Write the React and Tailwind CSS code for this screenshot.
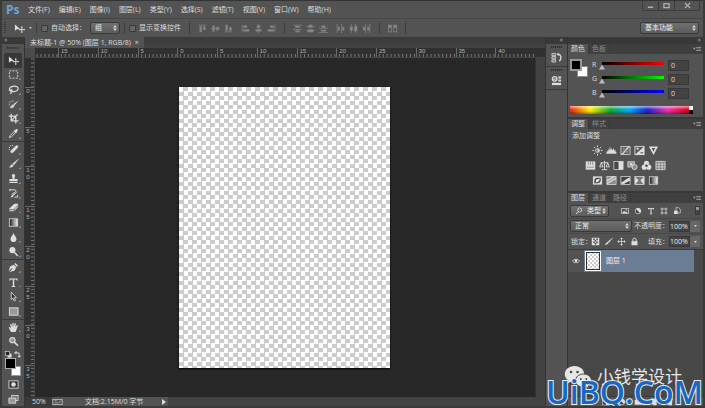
import clsx from 'clsx';

const menus = ['文件(F)', '编辑(E)', '图像(I)', '图层(L)', '类型(Y)', '选择(S)', '滤镜(T)', '视图(V)', '窗口(W)', '帮助(H)'];

const icons = {
  move: <><path d="M1 1.5v7l2-1.8 3.4-.4z" /><path d="M8.5 4.2v6M5.5 7.2h6" stroke="currentColor" strokeWidth="1" /><path d="M8.5 3.4l1.2 1.4H7.3zM8.5 11l1.2-1.4H7.3zM4.8 7.2L6.2 6v2.4zM12 7.2L10.8 6v2.4z" /></>,
  marquee: <rect x="1.5" y="2" width="9" height="8" fill="none" stroke="currentColor" strokeDasharray="2 1.4" />,
  lasso: <path d="M3.2 8.2C.6 7 1 3.4 5 2.6c4-.7 6.600.8 6 2.900-.5 2.200-4 3.500-7.300 2.300-1.800-.8-.4-2.200.7-1 .8 1.200-.4 2.400-1.800 3.900" fill="none" stroke="currentColor" strokeWidth="1.3" />,
  quick: <><path d="M11.500 1.500L7 7 5.600 5.800z" /><path d="M5.200 6.200l1.500 1.400C6 9.500 4 9.800 2.500 9.300c1.400-.6 1.300-2.500 2.700-3.100z" stroke="currentColor" strokeWidth=".8" /><path d="M6 2.500C3.500 1.500 1 3.500 1.500 6c.1.800.5 1.400 1 1.800" fill="none" stroke="currentColor" strokeDasharray="1.200 1" strokeWidth=".9" /></>,
  crop: <path d="M3.500.8v7.700h8M.8 3.500h7.700v8M4 8l6.500-6.500" fill="none" stroke="currentColor" strokeWidth="1.400" />,
  dropper: <><path d="M7.200 2.800l1.600-1.500c1-.9 2.600.6 1.800 1.700L9.200 4.600l.4.500-1 .9-2.700-2.700.9-.9z" /><path d="M6.300 4.300L2.500 8.200 1.500 10.500l2.300-1 3.900-3.800" fill="none" stroke="currentColor" strokeWidth="1" /></>,
  heal: <><path d="M3.300 7.300l5.200-5.200c1.400-1.200 3.300.6 2 2L5.300 9.300c-1.400 1.200-3.200-.7-2-2z" stroke="currentColor" strokeWidth=".6" /><path d="M5.500 1.800C3 .9.800 3 1.300 5.500c.1.800.5 1.300.8 1.700" fill="none" stroke="currentColor" strokeDasharray="1.200 1" strokeWidth=".9" /></>,
  brush: <><path d="M11.500 1.200L6.500 7.500 5 6.200z" stroke="currentColor" strokeWidth=".4" /><path d="M4.600 6.700l1.500 1.400C5.200 10 3 10.600.8 10.200c1.800-.7 2-3 3.800-3.500z" /></>,
  stamp: <path d="M4.800 4.500C3.500 2.800 4.500 1 6 1s2.500 1.800 1.200 3.500L7 6.500h3.500V9h-9V6.500H5zM1.500 9.700h9v1.100h-9z" />,
  history: <><path d="M11 3.500L6.500 8 5.200 7z" /><path d="M5 7.300L6.300 8.500C5.500 10 4 10.300 2.500 10c1.300-.6 1.200-2.200 2.500-2.700z" /><path d="M2 2h5.500c1.400.2 1.500 1.800.4 2.400L4 7M7 10h3.500V7.500M2 1v2.500" fill="none" stroke="currentColor" strokeWidth="1" /></>,
  eraser: <><path d="M1 7.600L6 2.600Q6.500 2 7.300 2h3.300q1 .2.400 1L6.800 7.600z" /><path d="M1.200 8.300h5.200v1.900H1.800zM7.200 8l3.900-4.500v2L7.200 10z" opacity=".8" /></>,
  drop: <path d="M6 1c.5 2.500 3.300 4 3.300 6.500C9.300 9.700 7.800 11 6 11S2.700 9.700 2.700 7.500C2.700 5 5.500 3.500 6 1z" />,
  dodge: <><circle cx="4.800" cy="4.500" r="3.300" /><path d="M6.800 6.800l4 4" stroke="currentColor" strokeWidth="1.500" /></>,
  pen: <path d="M8 1l3 3-1.300 1.300L6.800 2.300zM6.200 2.900l2.900 2.900L7 9.600l-5.500 1.200L5 7.300l-.6-.7-3.600 3.500L2.200 5z" />,
  type: <path d="M1.500 1.500h9v2.700h-.8c-.2-1-.6-1.500-1.500-1.500H6.800v6.600c0 .6.300.8 1.200.9v.6H4v-.6c.9-.1 1.200-.3 1.200-.9V2.700H3.800c-.9 0-1.300.5-1.500 1.500h-.8z" />,
  select: <path d="M3.500 1.200v8.200l1.900-1.700 1.300 3.200 1.400-.6-1.400-3h2.500z" fill="#333" stroke="currentColor" strokeWidth=".9" />,
  shape: <rect x="1.500" y="2" width="9.500" height="8" fill="#999" stroke="currentColor" />,
  hand: <path d="M3.300 10.800L.8 6.300c-.2-.9.700-1.200 1.200-.5l1.200 1.400-.8-4.600c0-.9 1.100-1 1.300-.1L4.600 5.500 4.800 1.400c.1-.8 1.200-.8 1.300 0L6.300 5.400l.9-3.700c.3-.8 1.300-.6 1.300.2L8.200 5.800l1.400-2.200c.5-.6 1.300-.2 1.100.6L9.200 8.700l-1 2.200z" />,
  zoom: <><circle cx="4.800" cy="4.500" r="2.900" fill="#999" stroke="currentColor" strokeWidth="1.100" /><path d="M6.900 6.700l4 4" stroke="currentColor" strokeWidth="1.700" /></>,
  mask: <><rect x="1" y="2" width="10" height="8" fill="#333" stroke="currentColor" strokeWidth=".9" /><circle cx="6" cy="6" r="2.500" /></>,
  screen: <><rect x="4" y="1.500" width="7" height="5.500" fill="#777" stroke="currentColor" strokeWidth=".9" /><rect x="1" y="4.500" width="7.500" height="5.500" fill="#999" stroke="currentColor" strokeWidth=".9" /></>,
  gradient: <><rect x="1.500" y="2" width="9" height="8" fill="none" stroke="currentColor" />{[2, 4, 6, 8].map((x, i) => <rect key={x} x={x} y="2.500" width="2" height="7" fill={['#333', '#777', '#aaa', '#ddd'][i]} />)}</>,
  sun: <><circle cx="6" cy="6" r="2" fill="none" stroke="currentColor" /><path d="M6 4a2 2 0 010 4z" /><path d="M6 .5v2M6 9.500v2M.5 6h2M9.500 6h2M2.100 2.100l1.400 1.400M8.500 8.500l1.400 1.400M2.100 9.900l1.400-1.400M8.500 3.500l1.400-1.400" stroke="currentColor" /></>,
  levels: <path d="M.5 9.500V7l1 .5V5.500l1 1.500V4l1 2 .8-4L5.500 6l.8-3 1 3 1-2.500 1 3 1-1.500V7l1 .5v2z" />,
  curves: <><rect x="1" y="1.500" width="10" height="9" fill="none" stroke="currentColor" strokeWidth=".8" /><path d="M1 4.500h10M1 7.500h10M4.300 1.500v9M7.700 1.500v9" stroke="currentColor" strokeWidth=".4" /><path d="M1.500 10C6 9.500 6 2.500 10.500 2" fill="none" stroke="currentColor" strokeWidth="1.300" /></>,
  exposure: <><rect x="1" y="1.500" width="10" height="9" fill="none" stroke="currentColor" /><path d="M11 1.500v9H1z" /><path d="M2.500 4h3M4 2.600v2.800" stroke="currentColor" /><path d="M7 8.500h3" stroke="#444" /></>,
  vibrance: <path d="M1 1.500h10L6 10.800zM4 3.400L6 7l2-3.600z" fillRule="evenodd" />,
  hue: <><path d="M.8 1.500h10.400v9H.8z" /><path d="M3.500 1.500v4M6 1.500v4M8.500 1.500v4M2 7.800h8" stroke="#777" strokeWidth=".8" /></>,
  balance: <path d="M6 1v9M3 10.500h6M2 3h8M2.500 3L.8 7.500h3.600zM9.500 3L7.700 7.500h3.600z" fill="none" stroke="currentColor" strokeWidth="1" />,
  bw: <><rect x="1" y="1.500" width="10" height="9" fill="#444" stroke="currentColor" strokeWidth=".8" /><path d="M6 1.500h5v9H6z" /></>,
  photo: <><rect x="1" y="2" width="7" height="5.500" fill="#888" stroke="currentColor" /><circle cx="4.500" cy="4.700" r="1.500" /><circle cx="8.300" cy="7.700" r="2.700" fill="#888" stroke="currentColor" /></>,
  mixer: <><circle cx="6" cy="3.500" r="2.800" /><circle cx="3.500" cy="7.800" r="2.800" /><circle cx="8.500" cy="7.800" r="2.800" /><circle cx="6" cy="6.300" r="1.300" fill="#444" /></>,
  lookup: <path d="M1 1.500h10v9H1zM1 4.500h10M1 7.500h10M4.300 1.500v9M7.700 1.500v9" fill="#777" stroke="currentColor" strokeWidth=".9" />,
  invert: <><path d="M1 1.500h10v9H1z" /><path d="M2.500 9V6a3.500 3.500 0 013.500-3h3.500v3A3.500 3.500 0 016 9z" fill="#444" /><path d="M4 8c0-3 1-4 4.500-4-.5 2.500-1 4-4.500 4z" /></>,
  poster: <><rect x="1" y="1.500" width="10" height="9" fill="#888" stroke="currentColor" strokeWidth=".8" /><path d="M1 9.500L11 3.500M1 6.500l8-5" stroke="currentColor" strokeWidth="1.600" /></>,
  threshold: <><rect x="1" y="1.500" width="10" height="9" fill="#444" stroke="currentColor" strokeWidth=".8" /><path d="M1.500 7.500C5 7.500 7 3 10.800 3v3.500C8 6.500 6 10 1.500 10z" /></>,
  selective: <><rect x="1" y="1.500" width="10" height="9" fill="#777" stroke="currentColor" strokeWidth=".8" /><path d="M1 1.500L5 6 1 10.500zM11 1.500L7 6l4 4.500z" /></>,
  image: <><rect x="1" y="2" width="10" height="8" fill="none" stroke="currentColor" /><path d="M2 9l2.500-3.500L6.500 8l1.500-1.300L10 9z" /><circle cx="7.800" cy="4.500" r="1" /></>,
  half: <><circle cx="6" cy="6" r="4.200" fill="#444" stroke="currentColor" /><path d="M3 3a4.200 4.200 0 016 6z" /></>,
  frame: <path d="M3 .8v10.400M9 .8v10.400M.8 3h10.400M.8 9h10.400" fill="none" stroke="currentColor" strokeWidth="1.100" />,
  smart: <><path d="M4.500 1h4L11 3.500V9H4.500z" fill="none" stroke="currentColor" /><path d="M1.500 5.500H7v5H1.500z" /></>,
  checker: <><path d="M1 1h10v10H1z" /><path d="M3 2h2v2H3zM7 2h2v2H7zM5 4h2v2H5zM3 6h2v2H3zM7 6h2v2H7zM5 8h2v2H5z" fill="#444" /></>,
  cross: <path d="M6 .5l2 2.200H6.500v2.800h2.800V4l2.200 2-2.200 2V6.500H6.500v2.800H8l-2 2.200-2-2.200h1.500V6.500H2.700V8L.5 6l2.200-2v1.500h2.800V2.700H4z" />,
  lock: <><path d="M2 5.500h8v5.500H2z" /><path d="M3.800 5.500V3.500c0-2.600 4.400-2.600 4.400 0v2" fill="none" stroke="currentColor" strokeWidth="1.300" /></>,
  eye: <><path d="M.8 6C3 2.500 9 2.500 11.200 6 9 9.500 3 9.500.8 6z" fill="none" stroke="currentColor" strokeWidth="1.100" /><circle cx="6" cy="5.800" r="2" /></>,
  historyPanel: <><path d="M1 1.500h4v2.500H1zM1 5h4v2.500H1zM1 8.500h4V11H1z" fill="#777" stroke="currentColor" strokeWidth=".8" /><path d="M7 2.500h1.500c3 1 3 5 .5 7.500" fill="none" stroke="currentColor" strokeWidth="1.400" /><path d="M6 2.500L8.500.8v3.500z" /></>,
  properties: <><circle cx="4" cy="4.200" r="2.600" fill="#777" stroke="currentColor" strokeWidth="1.200" /><path d="M2 4h4v1H2zM8 1.500h3v2.300H8zM8 4.800h3V7H8z" /><path d="M1 8.500h10V11H1z" /></>,
  search: <><circle cx="7" cy="4.500" r="3" fill="none" stroke="currentColor" strokeWidth="1.200" /><path d="M5 6.800L1.500 10.500" stroke="currentColor" strokeWidth="1.500" /></>,
  folder: <path d="M1 2.500h4l1 1.500h5v6H1z" />,
  page: <path d="M2 1h8v10H5L2 8z" />,
  trash: <path d="M1.500 2h3V1h3v1h3v1.200h-9zM2.500 4h7L9 11H3z" />,
  menu: <path d="M0 4h4L2 7zM5 3h7v1H5zM5 5.500h7v1H5zM5 8h7v1H5z" />,
  alTop: <path d="M1 1h10v1H1zM2 3h3v8H2zM7 3h3v5H7z" />,
  alMid: <path d="M0 5.500h12v1H0zM2 2h3v8H2zM7 3.500h3v5H7z" />,
  alBottom: <path d="M1 10h10v1H1zM2 1h3v8H2zM7 4h3v5H7z" />,
  alLeft: <path d="M1 1h1v10H1zM3 2h5v3H3zM3 7h8v3H3z" />,
  alCenter: <path d="M5.500 0h1v12h-1zM3.500 2h5v3h-5zM2 7h8v3H2z" />,
  alRight: <path d="M10 1h1v10h-1zM4 2h5v3H4zM1 7h8v3H1z" />,
  diTop: <path d="M0 1h12v1H0zM3 2.500h6v2.500H3zM0 7h12v1H0zM3 8.500h6V11H3z" />,
  diMid: <path d="M0 2.500h12v1H0zM3.500 1h5v4h-5zM0 8.500h12v1H0zM2.500 7h7v4h-7z" />,
  diBottom: <path d="M0 5h12v1H0zM3.500 2h5v2.500h-5zM0 10.500h12v1H0zM2.500 7.500h7V10h-7z" />,
  diLeft: <path d="M1 0h1v12H1zM2.500 3.500H5v5H2.500zM7 0h1v12H7zM8.500 3.500H11v5H8.500z" />,
  diCenter: <path d="M2.500 0h1v12h-1zM1 3.500h4v5H1zM8.500 0h1v12h-1zM7 2.500h4v7H7z" />,
  diRight: <path d="M4.500 0h1v12h-1zM1.500 3.500H4v5H1.500zM10 0h1v12h-1zM7 3.500h2.500v5H7z" />,
  auto: <path d="M0 1h5v10H0zM1 5v5h3V5zM7 1h5v10H7zM8 5v5h3V5z" fillRule="evenodd" />,
};

const Icon = ({ name, className = 'size-[11px]' }) => (
  <svg viewBox="0 0 12 12" fill="currentColor" className={clsx('shrink-0', className)} aria-hidden="true">{icons[name]}</svg>
);

const toolGroups = [
  ['move', 'marquee', 'lasso', 'quick', 'crop', 'dropper'],
  ['heal', 'brush', 'stamp', 'history', 'eraser', 'gradient', 'drop', 'dodge'],
  ['pen', 'type', 'select', 'shape'],
  ['hand', 'zoom'],
];

const alignGroups = [
  ['alTop', 'alMid', 'alBottom'],
  ['alLeft', 'alCenter', 'alRight'],
  ['diTop', 'diMid', 'diBottom'],
  ['diLeft', 'diCenter', 'diRight'],
];

const channels = [
  { name: 'R', track: 'bg-[linear-gradient(to_right,#000,#f00)]' },
  { name: 'G', track: 'bg-[linear-gradient(to_right,#000,#0f0)]' },
  { name: 'B', track: 'bg-[linear-gradient(to_right,#000,#00f)]' },
];

const adjustments = [
  ['sun', 'levels', 'curves', 'exposure', 'vibrance'],
  ['hue', 'balance', 'bw', 'photo', 'mixer', 'lookup'],
  ['invert', 'poster', 'threshold', 'selective', 'gradient'],
];

const Separator = () => <span className="h-3 w-px shrink-0 bg-[#3c3c3c]" />;

const Grip = () => <div className="mx-auto h-[2px] w-3 bg-[repeating-linear-gradient(to_right,#333_0_1px,#4a4a4a_1px_2px)]" />;

const Select = ({ label, value, className, icon }) => (
  <div className={clsx('relative flex h-3 items-center rounded-xs border border-[#3a3a3a] bg-linear-to-b from-[#707070] to-[#5c5c5c]', className)}>
    {icon && <Icon name={icon} className="ml-1 size-2" />}
    <select aria-label={label} className="h-full w-full min-w-0 appearance-none bg-transparent pl-1 text-[#eee] outline-none">
      <option>{value}</option>
    </select>
    <svg viewBox="0 0 6 10" fill="#ddd" className="pointer-events-none absolute right-[2px] h-[6px] w-1"><path d="M3 0l3 4H0zM3 10l3-4H0z" /></svg>
  </div>
);

const Checkbox = ({ id, children }) => (
  <label htmlFor={id} className="flex items-center gap-[3px] whitespace-nowrap">
    <input id={id} type="checkbox" className="size-[7px] appearance-none rounded-[1px] border border-[#3a3a3a] bg-[#666] checked:bg-[#ccc]" />
    {children}
  </label>
);

const PanelTabs = ({ tabs }) => (
  <div className="flex h-[10px] shrink-0 items-stretch bg-[#3f3f3f]">
    {tabs.map((tab, i) => (
      <button key={tab} type="button" className={clsx('border-r border-[#383838] px-[3px] leading-[10px]', i === 0 ? 'bg-[#535353] text-[#ddd]' : 'text-[#8c8c8c]')}>{tab}</button>
    ))}
    <button type="button" aria-label="菜单" className="mr-[2px] ml-auto text-[#aaa]"><Icon name="menu" className="size-2" /></button>
  </div>
);

const MenuBar = () => (
  <header className="flex h-[18px] shrink-0 items-center border-t border-[#333] bg-[#535353]">
    <span className="w-[26px] pl-1 text-[12px] leading-4 font-bold text-[#6ba4dd]">Ps</span>
    <nav className="flex gap-[9px]">
      {menus.map(m => <button key={m} type="button" className="whitespace-nowrap">{m}</button>)}
    </nav>
    <div className="mr-[3px] ml-auto flex h-[10px] self-start rounded-b-xs border border-t-0 border-[#3c3c3c] text-[#bbb]">
      <button type="button" aria-label="最小化" className="flex w-4 items-center justify-center border-r border-[#3c3c3c]"><svg viewBox="0 0 8 8" className="size-[7px]"><path d="M1 6h6" stroke="currentColor" strokeWidth="1.500" /></svg></button>
      <button type="button" aria-label="最大化" className="flex w-4 items-center justify-center border-r border-[#3c3c3c]"><svg viewBox="0 0 8 8" className="size-[7px]"><rect x="1" y="2" width="6" height="4.500" fill="none" stroke="currentColor" strokeWidth="1.300" /></svg></button>
      <button type="button" aria-label="关闭" className="flex w-6 items-center justify-center"><svg viewBox="0 0 8 8" className="size-[7px]"><path d="M1 1l6 6M7 1L1 7" stroke="currentColor" strokeWidth="1.300" /></svg></button>
    </div>
  </header>
);

const OptionsBar = () => (
  <div className="flex h-[19px] shrink-0 items-center border-t border-[#454545] bg-[#535353] pr-1">
    <span className="ml-[2px] h-3 w-[2px] bg-[repeating-linear-gradient(to_bottom,#383838_0_1px,#535353_1px_2px)]" />
    <button type="button" aria-label="移动工具" className="ml-2 flex items-center gap-1">
      <Icon name="move" />
      <svg viewBox="0 0 4 3" className="h-[2px] w-[3px]" fill="#ccc"><path d="M0 0h4L2 3z" /></svg>
    </button>
    <div className="ml-1 flex items-center gap-1">
      <Separator />
      <Checkbox id="auto-select">自动选择：</Checkbox>
      <Select label="自动选择" value="组" className="w-[30px]" />
      <Separator />
      <Checkbox id="show-transform">显示变换控件</Checkbox>
    </div>
    <div className="ml-2 flex items-center gap-2 text-[#858585]">
      <Separator />
      {alignGroups.map((group, i) => (
        <div key={i} className="flex items-center gap-2">
          <div className="flex gap-1">
            {group.map(name => <button key={name} type="button" aria-label={name}><Icon name={name} className="size-[9px]" /></button>)}
          </div>
          {(i === 1 || i === 3) && <Separator />}
        </div>
      ))}
      <button type="button" aria-label="自动对齐图层"><Icon name="auto" className="size-[9px]" /></button>
      <Separator />
    </div>
    <Select label="工作区" value="基本功能" className="ml-auto w-[59px]" />
  </div>
);

const Toolbar = () => (
  <aside className="flex w-[22px] shrink-0 flex-col bg-[#535353]">
    <div className="h-[7px] shrink-0 bg-[#383838] pl-[2px] text-[7px] leading-[6px] text-[#aaa]">»</div>
    <div className="h-[9px] shrink-0 pt-[3px]"><Grip /></div>
    <div className="flex min-h-0 flex-1 flex-col">
      {toolGroups.map((group, g) => (
        <div key={g} className={clsx('flex min-h-0 flex-col px-[2px]', ['flex-6', 'flex-8', 'flex-4', 'flex-2'][g], g > 0 && 'border-t border-[#3a3a3a]')}>
          {group.map(name => (
            <button key={name} type="button" aria-label={name} className={clsx('flex min-h-0 flex-1 items-center justify-center rounded-xs', name === 'move' && 'bg-[#383838]')}>
              <Icon name={name} />
              {name !== 'move' && name !== 'zoom' && <span className="-mr-[2px] mb-[2px] size-[2px] self-end bg-[#aaa] [clip-path:polygon(100%_0,100%_100%,0_100%)]" />}
            </button>
          ))}
        </div>
      ))}
    </div>
    <div className="flex shrink-0 justify-between px-[3px] pt-[2px]">
      <svg viewBox="0 0 8 8" className="size-[7px]"><rect x="3" y="3" width="4.500" height="4.500" fill="#ddd" /><rect x=".5" y=".5" width="4.500" height="4.500" fill="#222" stroke="#ccc" strokeWidth=".8" /></svg>
      <svg viewBox="0 0 8 8" className="size-[7px]" fill="none" stroke="#ccc" strokeWidth="1.200"><path d="M1 2h3c1.500 0 2 .5 2 2v3M3 .5L1 2l2 1.500M4.500 5.500L6 7l1.500-1.500" /></svg>
    </div>
    {/* Foreground over background swatch */}
    <div className="relative mx-[3px] h-[18px] shrink-0">
      <span className="absolute right-0 bottom-0 size-[10px] border border-[#999] bg-white" />
      <span className="absolute top-0 left-0 size-[11px] border border-[#aaa] bg-black" />
    </div>
    <button type="button" aria-label="快速蒙版" className="flex h-4 shrink-0 items-center justify-center"><Icon name="mask" /></button>
    <button type="button" aria-label="屏幕模式" className="flex h-[14px] shrink-0 items-center justify-center"><Icon name="screen" /></button>
  </aside>
);

const TopRuler = () => (
  <div className="flex h-[10px] shrink-0 overflow-hidden border-b border-[#454545] bg-[#303030] pr-[10px] font-['Liberation_Sans'] text-[6px] leading-[7px] text-[#b0b0b0]">
    <span className="w-[10px] shrink-0 bg-[#4b4b4b]" />
    <span className="w-[23px] shrink-0 bg-[linear-gradient(to_right,#777_1px,transparent_1px)] bg-[size:4px_3px] bg-bottom bg-repeat-x" />
    {[15, 10, 5, 0, 5, 10, 15, 20, 25, 30, 35, 40].map((n, i) => (
      <span key={i} className="min-w-0 flex-1 border-l border-[#6a6a6a] bg-[linear-gradient(to_right,#777_1px,transparent_1px)] bg-[size:10%_3px] bg-bottom bg-repeat-x pl-[2px]">{n}</span>
    ))}
  </div>
);

const SideRuler = () => (
  <div className="flex w-[10px] shrink-0 flex-col overflow-hidden border-r border-[#454545] bg-[#303030] text-center font-['Liberation_Sans'] text-[6px] leading-[7px] text-[#b0b0b0]">
    <span className="h-[29px] shrink-0 bg-[linear-gradient(to_bottom,#777_1px,transparent_1px)] bg-[size:3px_4px] bg-right bg-repeat-y" />
    {[0, 5, 10, 15, 20, 25, 30, 35].map((n, i) => (
      <span key={n} className={clsx('flex min-h-0 flex-col border-t border-[#6a6a6a] bg-[linear-gradient(to_bottom,#777_1px,transparent_1px)] bg-right bg-repeat-y pr-[3px]', i === 7 ? 'flex-4 bg-[size:3px_12.5%]' : 'flex-5 bg-[size:3px_10%]')}>
        {String(n).split('').map((d, k) => <span key={k}>{d}</span>)}
      </span>
    ))}
  </div>
);

const Workspace = () => (
  <main className="flex min-w-0 flex-1 flex-col border-l border-[#333]">
    <div className="flex h-[11px] shrink-0 items-stretch bg-linear-to-b from-[#3a3a3a] to-[#434343]">
      <button type="button" className="flex items-center gap-1 bg-[#535353] px-[5px] whitespace-nowrap">
        <span>未标题-1 @ 50% (图层 1, RGB/8)</span><span>×</span>
      </button>
    </div>
    <TopRuler />
    <div className="flex min-h-0 flex-1">
      <SideRuler />
      <div className="flex min-w-0 flex-1 items-center justify-center bg-[#282828] pr-px">
        <div className="h-[281px] w-[211px] bg-[conic-gradient(#ccc_25%,#fff_0_50%,#ccc_0_75%,#fff_0)] bg-[size:9px_9px] shadow-[0_1px_2px_#000]" />
      </div>
      <div className="w-[10px] shrink-0 border-l border-[#333] bg-[#424242]" />
    </div>
    <div className="flex h-[9px] shrink-0 items-center bg-[#434343] leading-[9px]">
      <span className="w-[27px] self-stretch bg-[#3a3a3a] pl-[7px]">50%</span>
      <div className="flex w-[116px] items-center self-stretch bg-[#535353]">
        <svg viewBox="0 0 12 7" className="h-[6px] w-[11px]" fill="none" stroke="#bbb"><rect x=".5" y=".5" width="11" height="6" /><path d="M3 2h2M3 4.500h3M7 5l3-3" /></svg>
        <span className="ml-[22px] whitespace-nowrap">文档:2.15M/0 字节</span>
        <button type="button" aria-label="状态" className="mr-[2px] ml-auto"><svg viewBox="0 0 4 6" className="h-[6px] w-1" fill="#ddd"><path d="M0 0l4 3-4 3z" /></svg></button>
      </div>
    </div>
  </main>
);

const Dock = () => (
  <aside className="flex w-[23px] shrink-0 flex-col border-x border-[#333] bg-[#535353]">
    <div className="h-[7px] shrink-0 bg-[#383838] pr-1 text-right leading-[6px] text-[#aaa]">«</div>
    {['historyPanel', 'properties'].map(name => (
      <div key={name} className="flex h-[23px] shrink-0 flex-col border-b border-[#3a3a3a] pt-[2px]">
        <Grip />
        <button type="button" aria-label={name} className="flex flex-1 items-center justify-center"><Icon name={name} /></button>
      </div>
    ))}
  </aside>
);

const ColorPanel = () => (
  <section className="border-b-2 border-[#383838]">
    <PanelTabs tabs={['颜色', '色板']} />
    <div className="flex pt-[5px] pl-[2px]">
      <div className="relative h-[18px] w-[18px]">
        <span className="absolute right-0 bottom-0 size-[11px] border border-[#888] bg-white" />
        <span className="absolute top-0 left-0 size-3 border-2 border-[#999] bg-black" />
      </div>
      <div className="ml-1 flex flex-col gap-[2px]">
        {channels.map(c => (
          <div key={c.name} className="flex h-3 items-center">
            <label htmlFor={`channel-${c.name}`} className="w-[5px]">{c.name}</label>
            <input id={`channel-${c.name}`} type="range" min="0" max="255" defaultValue="0" className={clsx('mr-px ml-[2px] h-[9px] w-[68px] appearance-none bg-[size:62px_3px] bg-[position:3px_1px] bg-no-repeat [&::-webkit-slider-thumb]:mt-1 [&::-webkit-slider-thumb]:h-[5px] [&::-webkit-slider-thumb]:w-[6px] [&::-webkit-slider-thumb]:appearance-none [&::-webkit-slider-thumb]:bg-[#bbb] [&::-webkit-slider-thumb]:[clip-path:polygon(50%_0,100%_100%,0_100%)]', c.track)} />
            <input aria-label={`${c.name} 值`} defaultValue="0" className="h-[11px] w-[21px] border border-[#383838] bg-[#434343] pl-[2px]" />
          </div>
        ))}
      </div>
    </div>
    <div className="mt-[7px] mr-[10px] mb-[3px] ml-[2px] flex h-2">
      <div className="flex-1 bg-[linear-gradient(to_bottom,#fff9,#fff0_45%,#0000_60%,#0006),linear-gradient(to_right,#e21,#fe0_17%,#1a3_34%,#0af_50%,#22c_65%,#e3a_82%,#d01)]" />
      <div className="w-1 bg-linear-to-b from-white from-50% to-black to-50%" />
    </div>
  </section>
);

const AdjustPanel = () => (
  <section className="border-b-2 border-[#383838]">
    <PanelTabs tabs={['调整', '样式']} />
    <p className="pt-[2px] pl-1 leading-[10px]">添加调整</p>
    <div className="flex flex-col items-center gap-1 pt-1 pr-[20px] pb-[5px]">
      {adjustments.map((row, i) => (
        <div key={i} className="flex gap-[3px]">
          {row.map(name => <button key={name} type="button" aria-label={name}><Icon name={name} className="size-[11px]" /></button>)}
        </div>
      ))}
    </div>
  </section>
);

const Percent = ({ id, label }) => (
  <div className="ml-auto flex items-center">
    <label htmlFor={id} className="whitespace-nowrap">{label}</label>
    <input id={id} defaultValue="100%" className="h-[11px] w-[21px] border border-[#383838] bg-[#434343] text-[#eee]" />
    <button type="button" aria-label={`${label}选项`} className="flex h-[11px] w-[10px] items-center justify-center bg-[#666]"><svg viewBox="0 0 4 3" className="h-[2px] w-[3px]" fill="#ddd"><path d="M0 0h4L2 3z" /></svg></button>
  </div>
);

const LayersPanel = () => (
  <section className="flex min-h-0 flex-1 flex-col">
    <PanelTabs tabs={['图层', '通道', '路径']} />
    <div className="flex h-[15px] shrink-0 items-center pr-[3px] pl-[2px]">
      <Select label="过滤" value="类型" icon="search" className="w-[39px]" />
      <div className="ml-3 flex gap-[5px]">
        {['image', 'half', 'type', 'frame', 'smart'].map(name => <button key={name} type="button" aria-label={name}><Icon name={name} className="size-[8px]" /></button>)}
      </div>
      <span className="ml-auto h-[9px] w-[5px] border border-[#383838] bg-linear-to-b from-[#999] from-40% to-[#444] to-40%" />
    </div>
    <div className="flex h-[15px] shrink-0 items-center border-t border-[#484848] pr-[3px] pl-[2px]">
      <Select label="混合模式" value="正常" className="w-[62px]" />
      <Percent id="opacity" label="不透明度：" />
    </div>
    <div className="flex h-4 shrink-0 items-center border-t border-[#484848] pr-[3px] pl-[3px]">
      <span className="w-5 whitespace-nowrap">锁定：</span>
      <div className="flex gap-1">
        {['checker', 'brush', 'cross', 'lock'].map(name => <button key={name} type="button" aria-label={name}><Icon name={name} className="size-[9px]" /></button>)}
      </div>
      <Percent id="fill" label="填充：" />
    </div>
    <div className="flex min-h-0 flex-1 flex-col border-t border-[#3a3a3a] bg-[#484848]">
      <div className="mr-[9px] flex h-[22px] shrink-0">
        <button type="button" aria-label="可见" className="flex w-4 items-center justify-center bg-[#535353]"><Icon name="eye" className="size-[8px]" /></button>
        <div className="flex flex-1 items-center gap-[5px] bg-[#6b7d94] pl-px">
          <span className="h-5 w-[16px] border border-white bg-[conic-gradient(#ccc_25%,#fff_0_50%,#ccc_0_75%,#fff_0)] bg-[size:4px_4px] outline outline-[#333] -outline-offset-2" />
          <span className="text-[#eee]">图层 1</span>
        </div>
      </div>
    </div>
    <div className="flex h-[10px] shrink-0 items-center gap-2 border-t border-[#3a3a3a] bg-[#535353] pl-[34px]">
      {['bw', 'half', 'folder', 'page', 'trash'].map(name => <button key={name} type="button" aria-label={name}><Icon name={name} className="size-2" /></button>)}
    </div>
  </section>
);

const Watermark = () => (
  <div className="pointer-events-none absolute right-0 bottom-0 flex flex-col text-[#e6e6e6]">
    <div className="flex items-center gap-[5px] pl-[18px]">
      <svg viewBox="0 0 28 24" className="h-6 w-7" aria-hidden="true">
        <path d="M10.500 1C5 1 .8 4.600.8 9.200c0 2.600 1.300 4.800 3.600 6.400L3.500 18.500l3.600-1.900c1.100.3 2.200.5 3.400.5 5.400 0 9.700-3.500 9.700-8S15.900 1 10.500 1z" fill="#e6e6e6" />
        <path d="M19.500 9c-4.600 0-8 2.900-8 6.600s3.400 6.600 8 6.600c1 0 1.900-.1 2.700-.4l3 1.600-.8-2.500c1.900-1.200 3.100-3.100 3.100-5.300C27.500 11.900 24.100 9 19.500 9z" fill="#e6e6e6" stroke="#484848" />
        <g fill="#484848"><circle cx="7" cy="7" r="1.300" /><circle cx="13.500" cy="7" r="1.300" /><circle cx="16.800" cy="14" r="1" /><circle cx="22.300" cy="14" r="1" /></g>
      </svg>
      <span className="text-[17px] leading-6">小钱学设计</span>
    </div>
    <div className="-mt-[11px] font-['Open_Sans'] text-[32px] leading-7 font-semibold text-[#1568c4] [-webkit-text-stroke:2px_#e8eef5] [paint-order:stroke_fill]">UiBQ.CoM</div>
  </div>
);

export default function App() {
  return (
    <div className="relative flex h-screen flex-col overflow-hidden border-x-2 border-b-2 border-[#3a3a3a] bg-[#535353] font-['Open_Sans','Noto_Sans_CJK_SC',sans-serif] text-[7px] leading-[10px] text-[#dedede]">
      <MenuBar />
      <OptionsBar />
      <div className="flex min-h-0 flex-1">
        <Toolbar />
        <Workspace />
        <Dock />
        <aside className="flex w-[135px] shrink-0 flex-col bg-[#535353]">
          <div className="h-[7px] shrink-0 bg-[#383838] pr-[2px] text-right leading-[6px] text-[#aaa]">»</div>
          <ColorPanel />
          <AdjustPanel />
          <LayersPanel />
        </aside>
      </div>
      <Watermark />
    </div>
  );
}
